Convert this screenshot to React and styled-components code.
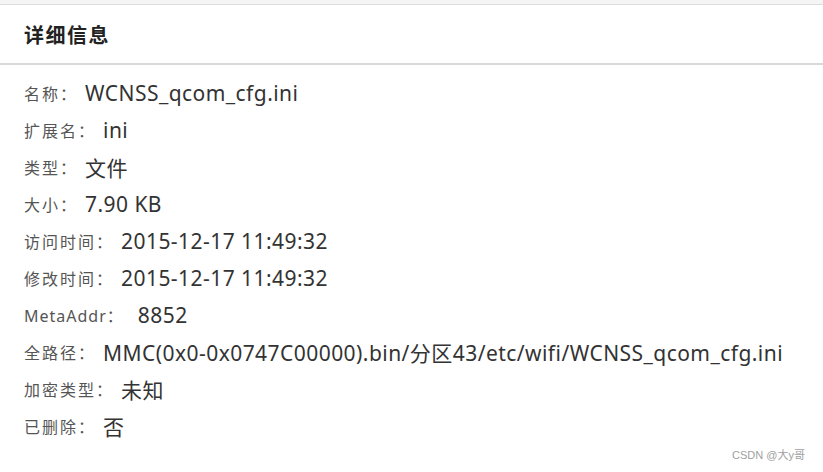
import React from "react";
import styled, { createGlobalStyle } from "styled-components";

const GlobalStyle = createGlobalStyle`
  html, body {
    margin: 0;
    padding: 0;
    background: #ffffff;
  }
  body {
    font-family: "Noto Sans", "Noto Sans CJK SC", sans-serif;
  }
`;

const Page = styled.div`
  position: relative;
  width: 823px;
  height: 472px;
  background: #fff;
  overflow: hidden;
`;

const TopStrip = styled.div`
  height: 4px;
  background: #f5f5f5;
  border-bottom: 1px solid #dcdcdc;
`;

const Header = styled.div`
  height: 58px;
  display: flex;
  align-items: center;
  padding-left: 24px;
  border-bottom: 2px solid #d9d9d9;
`;

const Title = styled.h2`
  margin: 0;
  font-family: "Noto Sans CJK SC", sans-serif;
  font-size: 20px;
  font-weight: 700;
  letter-spacing: 1.5px;
  color: #222;
`;

const List = styled.div`
  display: flex;
  flex-direction: column;
  padding: 9px 0 0 24px;
`;

const Row = styled.div`
  height: 37px;
  display: flex;
  align-items: center;
`;

const Label = styled.span`
  font-family: "Noto Sans", "Noto Sans CJK SC", sans-serif;
  font-size: 16px;
  letter-spacing: ${({ $latin }) => ($latin ? "1px" : "2px")};
  color: #555;
`;

const Value = styled.span`
  margin-left: ${({ $latin }) => ($latin ? "14px" : "7px")};
  font-family: "Noto Sans", "Noto Sans CJK SC", sans-serif;
  font-size: 21px;
  letter-spacing: 0.45px;
  color: #333;
`;

const Watermark = styled.div`
  position: absolute;
  right: 18px;
  bottom: 10px;
  font-family: "Liberation Sans", "Noto Sans CJK SC", sans-serif;
  font-size: 11px;
  color: #a0a0a0;
`;

const rows = [
  ["名称：", "WCNSS_qcom_cfg.ini"],
  ["扩展名：", "ini"],
  ["类型：", "文件"],
  ["大小：", "7.90 KB"],
  ["访问时间：", "2015-12-17 11:49:32"],
  ["修改时间：", "2015-12-17 11:49:32"],
  ["MetaAddr：", "8852", true],
  ["全路径：", "MMC(0x0-0x0747C00000).bin/分区43/etc/wifi/WCNSS_qcom_cfg.ini"],
  ["加密类型：", "未知"],
  ["已删除：", "否"],
];

const App = () => {
  return (
    <Page>
      <GlobalStyle />
      <TopStrip />
      <Header>
        <Title>详细信息</Title>
      </Header>
      <List>
        {rows.map(([label, value, latin]) => (
          <Row key={label}>
            <Label $latin={latin}>{label}</Label>
            <Value $latin={latin}>{value}</Value>
          </Row>
        ))}
      </List>
      <Watermark>CSDN @大y哥</Watermark>
    </Page>
  );
};

export default App;
